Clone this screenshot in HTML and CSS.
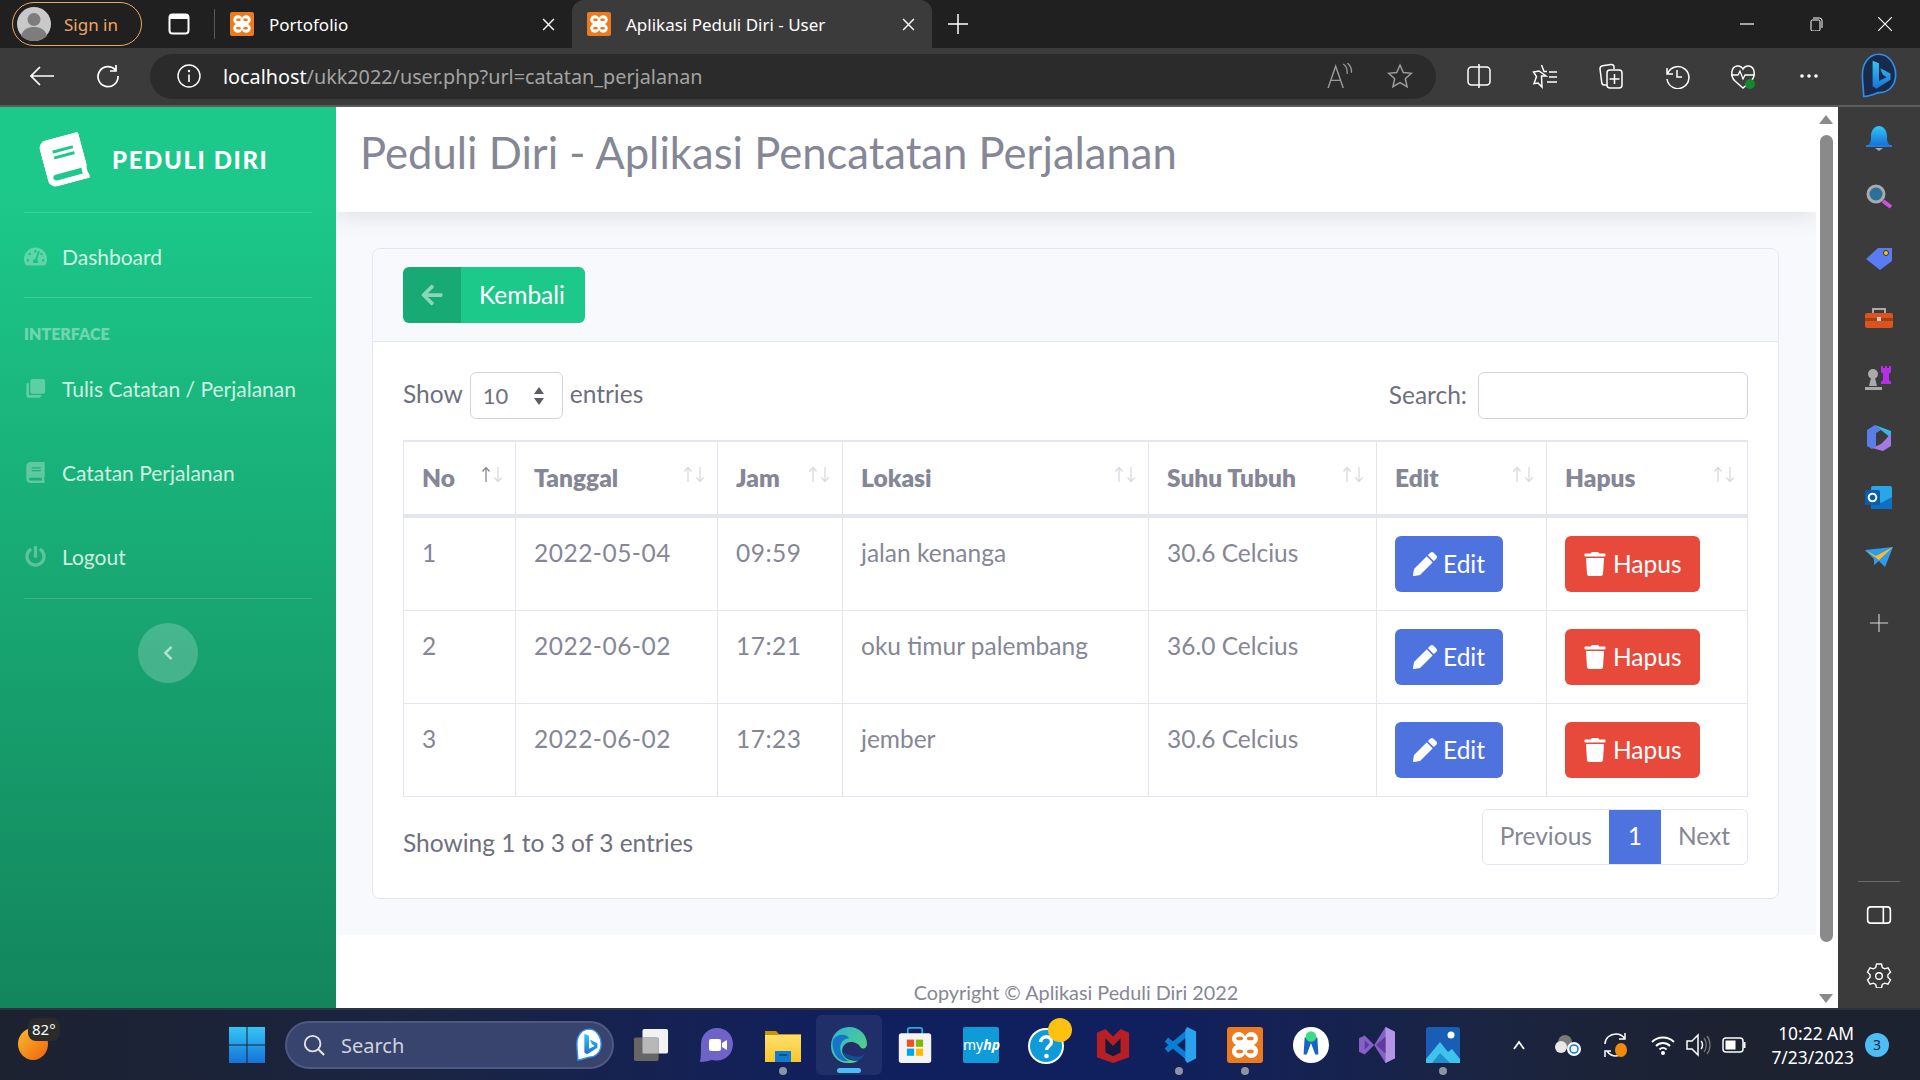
FILE: index.html
```html
<!DOCTYPE html>
<html lang="en">
<head>
	<meta charset="utf-8" />
	<title>Aplikasi Peduli Diri - User</title>
	<link rel="stylesheet" href="styles.css">
</head>
<body>
	<svg class="defs" width="0" height="0">
		<defs>
			<linearGradient id="gBlue" x1="0" y1="0" x2="0" y2="1"><stop offset="0" stop-color="#35c5f5"/><stop offset="1" stop-color="#1573d8"/></linearGradient>
			<linearGradient id="gSun" x1="0" y1="0" x2="1" y2="1"><stop offset="0" stop-color="#fbbb2c"/><stop offset="1" stop-color="#f0620e"/></linearGradient>
			<linearGradient id="gFolder" x1="0" y1="0" x2="0" y2="1"><stop offset="0" stop-color="#ffdf6b"/><stop offset="1" stop-color="#f9c62b"/></linearGradient>
			<linearGradient id="gEdge" x1="0" y1="0" x2="1" y2="1"><stop offset="0" stop-color="#2bb4d9"/><stop offset="1" stop-color="#62d66c"/></linearGradient>
			<symbol id="xampp" viewBox="0 0 24 24">
				<rect x="0" y="0" width="24" height="24" rx="2" fill="#ec7a1f"/>
				<g fill="#fff"><circle cx="7.800" cy="7.800" r="4.500"/><circle cx="16.200" cy="7.800" r="4.500"/><circle cx="7.800" cy="16.200" r="4.500"/><circle cx="16.200" cy="16.200" r="4.500"/><rect x="8" y="8" width="8" height="8"/></g>
				<g fill="#ec7a1f"><rect x="6.200" y="6.500" width="4.500" height="2.400" rx="1.200"/><rect x="13.300" y="6.500" width="4.500" height="2.400" rx="1.200"/><rect x="6.200" y="15.100" width="4.500" height="2.400" rx="1.200"/><rect x="13.300" y="15.100" width="4.500" height="2.400" rx="1.200"/></g>
			</symbol>
			<symbol id="bing" viewBox="0 0 30 36">
				<path d="M15 1C7 1 2 8 2 17c0 6 1 12 1 17 4 0 8-2 12-3 8 0 13-6 13-14S23 1 15 1z" fill="#fff" stroke="#2f8fe8" stroke-width="1.500"/>
				<path d="M10 6l5 2v14l6-3-3-2-2-5 8 4v5l-11 7-3-2z" fill="url(#gBlue)"/>
			</symbol>
			<symbol id="fa-pencil" viewBox="0 0 512 512"><path d="M497.9 142.1l-46.1 46.1c-4.700 4.700-12.300 4.700-17 0l-111-111c-4.700-4.700-4.700-12.300 0-17l46.100-46.100c18.700-18.700 49.100-18.700 67.900 0l60.100 60.100c18.800 18.700 18.800 49.100 0 67.900zM284.200 99.800L21.600 362.400.4 483.900c-2.900 16.400 11.400 30.600 27.800 27.800l121.500-21.300 262.600-262.600c4.700-4.700 4.700-12.300 0-17l-111-111c-4.800-4.700-12.400-4.700-17.100 0z"/></symbol>
			<symbol id="fa-trash" viewBox="0 0 448 512"><path d="M432 32H312l-9.400-18.700A24 24 0 0 0 281.100 0H166.800a23.720 23.720 0 0 0-21.400 13.300L136 32H16A16 16 0 0 0 0 48v32a16 16 0 0 0 16 16h416a16 16 0 0 0 16-16V48a16 16 0 0 0-16-16zM53.200 467a48 48 0 0 0 47.900 45h245.800a48 48 0 0 0 47.900-45L416 128H32z"/></symbol>
			<symbol id="fa-book" viewBox="0 0 448 512"><path d="M448 360V24c0-13.300-10.700-24-24-24H96C43 0 0 43 0 96v320c0 53 43 96 96 96h328c13.300 0 24-10.700 24-24v-16c0-7.500-3.500-14.300-8.900-18.700-4.200-15.400-4.200-59.300 0-74.700 5.400-4.300 8.900-11.100 8.900-18.600zM128 134c0-3.300 2.700-6 6-6h212c3.300 0 6 2.700 6 6v20c0 3.300-2.700 6-6 6H134c-3.300 0-6-2.700-6-6v-20zm0 64c0-3.300 2.700-6 6-6h212c3.300 0 6 2.700 6 6v20c0 3.300-2.700 6-6 6H134c-3.300 0-6-2.700-6-6v-20zm253.400 250H96c-17.700 0-32-14.300-32-32 0-17.600 14.400-32 32-32h285.400c-1.900 17.100-1.900 46.900 0 64z"/></symbol>
			<symbol id="sort" viewBox="0 0 22 17"><path d="M5 16V2M1.500 5.500L5 1.500l3.500 4" fill="none" stroke="currentColor" stroke-width="1.300"/><path d="M17 1v14M13.500 11.500l3.500 4 3.500-4" fill="none" stroke="#d9dae1" stroke-width="1.300"/></symbol>
		</defs>
	</svg>

	<!-- browser tabs -->
	<div class="tabbar">
		<div class="signin">
			<svg class="avatar" viewBox="0 0 34 34"><circle cx="17" cy="17" r="17" fill="#c9c9c9"/><circle cx="17" cy="12.500" r="6.500" fill="#7d7d7d"/><path d="M4 29c2-7 7-9 13-9s11 2 13 9c-3 3-8 5-13 5s-10-2-13-5z" fill="#7d7d7d"/></svg>
			<span>Sign in</span>
		</div>
		<svg class="tabs-icon" viewBox="0 0 22 22"><rect x="1.500" y="1.500" width="19" height="19" rx="3" fill="none" stroke="#fff" stroke-width="2"/><path d="M1.500 4.500a3 3 0 0 1 3-3h13a3 3 0 0 1 3 3V6h-19z" fill="#fff"/></svg>
		<div class="tab-sep"></div>
		<div class="tab">
			<svg class="favicon"><use href="#xampp"/></svg>
			<span class="tab-title">Portofolio</span>
			<svg class="tab-close" viewBox="0 0 12 12"><path d="M1 1l10 10M11 1L1 11" stroke="#fff" stroke-width="1.300"/></svg>
		</div>
		<div class="tab tab-active">
			<svg class="favicon"><use href="#xampp"/></svg>
			<span class="tab-title">Aplikasi Peduli Diri - User</span>
			<svg class="tab-close" viewBox="0 0 12 12"><path d="M1 1l10 10M11 1L1 11" stroke="#fff" stroke-width="1.300"/></svg>
		</div>
		<svg class="tab-new" viewBox="0 0 20 20"><path d="M10 0v20M0 10h20" stroke="#fff" stroke-width="1.500"/></svg>
		<div class="win-ctrl">
			<svg viewBox="0 0 14 14"><path d="M0 7h14" stroke="#fff" stroke-width="1.200"/></svg>
			<svg viewBox="0 0 14 14"><rect x="2" y="3" width="9" height="11" rx="1.500" fill="none" stroke="#fff"/><path d="M4 1h6.500A2.500 2.500 0 0 1 13 3.500V11" fill="none" stroke="#fff"/></svg>
			<svg viewBox="0 0 14 14"><path d="M0 0l14 14M14 0L0 14" stroke="#fff" stroke-width="1.100"/></svg>
		</div>
	</div>

	<!-- address bar -->
	<div class="toolbar">
		<svg class="tool tool-back" viewBox="0 0 24 20"><path d="M24 10H2M10 1l-9 9 9 9" fill="none" stroke="#fff" stroke-width="1.700"/></svg>
		<svg class="tool tool-reload" viewBox="0 0 24 24"><path d="M19.500 6A10 10 0 1 0 22 12M20 1v6h-6" fill="none" stroke="#fff" stroke-width="1.700"/></svg>
		<div class="address">
			<svg class="info" viewBox="0 0 24 24"><circle cx="12" cy="12" r="11" fill="none" stroke="#fff" stroke-width="1.400"/><path d="M12 10.500V18" stroke="#fff" stroke-width="1.600"/><circle cx="12" cy="7" r="1.200" fill="#fff"/></svg>
			<span class="url"><b>localhost</b>/ukk2022/user.php?url=catatan_perjalanan</span>
			<svg class="addr-icon read" viewBox="0 0 24 24"><path d="M1 23L8 3l7 20M4 16h8" fill="none" stroke="#9a9a9a" stroke-width="1.300"/><path d="M15 1c3 2 4 5 3.500 9M19 0c3 3 4 6 3.500 9" fill="none" stroke="#9a9a9a" stroke-width="1.200"/></svg>
			<svg class="addr-icon star" viewBox="0 0 26 26"><path d="M13 2l3.300 7.500 8 .8-6 5.400 1.800 8L13 19.600 5.900 23.700l1.800-8-6-5.400 8-.8z" fill="none" stroke="#9a9a9a" stroke-width="1.500"/></svg>
		</div>
		<div class="tool-group">
			<svg viewBox="0 0 26 26"><rect x="2" y="4" width="22" height="18" rx="3.500" fill="none" stroke="#fff" stroke-width="1.500"/><path d="M13 1v24" stroke="#fff" stroke-width="1.500"/></svg>
			<svg viewBox="0 0 26 26"><path d="M9.500 2l2.500 6.500h3M14 13H9.500l.5 11-4-4-4 .5 2.500-7-3-4.500 5.500-1z" fill="none" stroke="#fff" stroke-width="1.500"/><path d="M17 9h8M17 14h8M15 19h10" stroke="#fff" stroke-width="1.500"/></svg>
			<svg viewBox="0 0 26 26"><path d="M9 22H6c-1 0-2-1-2.200-2L2 6c0-2 1-3 2.500-3.200L13 1.500c2-.2 3 1 3 2.500V6" fill="none" stroke="#fff" stroke-width="1.500"/><rect x="9" y="7" width="15" height="18" rx="3" fill="none" stroke="#fff" stroke-width="1.500"/><path d="M16.500 11v10M11.500 16h10" stroke="#fff" stroke-width="1.500"/></svg>
			<svg viewBox="0 0 26 26"><path d="M3 5v6h6M3.500 11A11 11 0 1 1 3 16" fill="none" stroke="#fff" stroke-width="1.500"/><path d="M13 7v7h5" fill="none" stroke="#fff" stroke-width="1.500"/></svg>
			<svg viewBox="0 0 26 26"><path d="M5 18C0 13 1 4 7 3c3-.5 5 1 6 3 1-2 3-3.500 6-3 6 1 7 10 2 15l-8 7z" fill="none" stroke="#fff" stroke-width="1.500"/><path d="M1 12h7l2-4 3 8 2-4h9" fill="none" stroke="#fff" stroke-width="1.300"/><circle cx="20" cy="21" r="5" fill="#128a2c"/></svg>
			<svg viewBox="0 0 26 26"><circle cx="6" cy="13" r="1.800" fill="#fff"/><circle cx="13" cy="13" r="1.800" fill="#fff"/><circle cx="20" cy="13" r="1.800" fill="#fff"/></svg>
		</div>
		<svg class="tool-bing" viewBox="0 0 30 36"><path d="M15 1C7 1 2 8 2 17c0 6 1 12 1 17 4 0 8-2 12-3 8 0 13-6 13-14S23 1 15 1z" fill="#1a2a4a" stroke="#2f8fe8" stroke-width="1.300"/><path d="M10 6l5 2v14l6-3-3-2-2-5 8 4v5l-11 7-3-2z" fill="url(#gBlue)"/></svg>
	</div>

	<div class="main">
		<!-- sidebar -->
		<aside class="sidebar">
			<div class="brand">
				<svg class="brand-icon"><use href="#fa-book"/></svg>
				<span class="brand-text">PEDULI DIRI</span>
			</div>
			<hr class="side-line">
			<a class="nav-first">
				<svg class="nav-icon" viewBox="0 0 576 512"><path d="M288 32C128.940 32 0 160.940 0 320c0 52.800 14.250 102.260 39.060 144.800 5.610 9.620 16.300 15.200 27.440 15.200h443c11.140 0 21.830-5.580 27.440-15.200C561.750 422.260 576 372.800 576 320c0-159.060-128.940-288-288-288zm0 64c14.710 0 26.580 10.130 30.320 23.650-1.110 2.260-2.640 4.230-3.450 6.670l-9.220 27.670c-5.130 3.490-10.970 6.010-17.640 6.010-17.670 0-32-14.330-32-32S270.330 96 288 96zM96 384c-17.670 0-32-14.330-32-32s14.330-32 32-32 32 14.330 32 32-14.330 32-32 32zm48-160c-17.670 0-32-14.330-32-32s14.330-32 32-32 32 14.330 32 32-14.330 32-32 32zm246.770-72.410l-61.330 184C343.130 347.330 352 364.540 352 384c0 11.720-3.380 22.550-8.880 32H232.880c-5.500-9.450-8.880-20.280-8.880-32 0-33.940 26.500-61.430 59.900-63.590l61.340-184.010c4.170-12.560 17.730-19.450 30.360-15.170 12.570 4.190 19.350 17.790 15.170 30.360zm14.660 57.200l15.520-46.550c3.470-1.290 7.130-2.230 11.050-2.230 17.670 0 32 14.330 32 32s-14.330 32-32 32c-11.380-.010-20.890-6.280-26.570-15.220zM480 384c-17.670 0-32-14.330-32-32s14.330-32 32-32 32 14.330 32 32-14.330 32-32 32z"/></svg>
				<span>Dashboard</span>
			</a>
			<hr class="side-line">
			<div class="side-head">INTERFACE</div>
			<a class="nav-item">
				<svg class="nav-icon" viewBox="0 0 24 24"><rect x="6" y="1" width="17" height="17" rx="2.500"/><path d="M4 5.500h.5V19.500h14v.5c0 1.500-1 2.500-2.500 2.500H4A2.500 2.500 0 0 1 1.500 20V8A2.500 2.500 0 0 1 4 5.500z"/></svg>
				<span>Tulis Catatan / Perjalanan</span>
			</a>
			<a class="nav-item">
				<svg class="nav-icon"><use href="#fa-book"/></svg>
				<span>Catatan Perjalanan</span>
			</a>
			<a class="nav-item">
				<svg class="nav-icon" viewBox="0 0 512 512"><path d="M400 54.100c63 45 104 118.600 104 201.900 0 136.800-110.800 247.700-247.500 248C120 504.300 8.200 393 8 256.400 7.900 173.100 48.900 99.300 111.800 54.200c11.700-8.300 28-4.800 35 7.700L162.600 90c5.900 10.500 3.100 23.800-6.600 31-41.500 30.800-68 79.600-68 134.900-.1 92.300 74.500 168.100 168 168.100 91.600 0 168.600-74.200 168-169.100-.3-51.800-24.700-101.800-68.100-134-9.700-7.200-12.400-20.500-6.500-30.900l15.800-28.100c7-12.400 23.200-16.100 34.800-7.900zM296 264V24c0-13.300-10.700-24-24-24h-32c-13.300 0-24 10.700-24 24v240c0 13.300 10.700 24 24 24h32c13.300 0 24-10.700 24-24z"/></svg>
				<span>Logout</span>
			</a>
			<hr class="side-line side-line-end">
			<div class="side-toggle">
				<svg viewBox="0 0 320 512"><path d="M34.520 239.030L228.870 44.690c9.370-9.370 24.570-9.370 33.940 0l22.670 22.670c9.350 9.350 9.370 24.520.04 33.900L131.490 256l154.020 154.750c9.340 9.380 9.320 24.550-.04 33.900l-22.670 22.670c-9.370 9.370-24.570 9.370-33.940 0L34.520 272.970c-9.370-9.370-9.370-24.570 0-33.940z"/></svg>
			</div>
		</aside>

		<!-- page -->
		<main class="page">
			<header class="topbar">
				<h1>Peduli Diri - Aplikasi Pencatatan Perjalanan</h1>
			</header>
			<section class="content">
				<div class="card">
					<div class="card-head">
						<a class="btn-back">
							<span class="btn-back-icon"><svg viewBox="0 0 448 512"><path d="M257.500 445.100l-22.200 22.200c-9.400 9.400-24.600 9.400-33.900 0L7 273c-9.400-9.400-9.400-24.600 0-33.900L201.400 44.700c9.400-9.400 24.600-9.400 33.900 0l22.200 22.200c9.500 9.500 9.300 25-.4 34.300L136.600 216H424c13.300 0 24 10.700 24 24v32c0 13.300-10.700 24-24 24H136.600l120.500 114.800c9.800 9.300 10 24.800.4 34.300z"/></svg></span>
							<span class="btn-back-text">Kembali</span>
						</a>
					</div>
					<div class="card-body">
						<div class="dt-top">
							<label class="dt-length">Show
								<span class="select-wrap">
									<select><option>10</option></select>
									<svg class="select-caret" viewBox="0 0 12 20"><path d="M6 1l5 7H1zM6 19l-5-7h10z"/></svg>
								</span>
								entries</label>
							<label class="dt-search">Search: <input type="text"></label>
						</div>
						<table class="dt-table">
							<colgroup>
								<col class="c-no"><col class="c-date"><col class="c-time"><col class="c-place"><col class="c-temp"><col class="c-edit"><col class="c-del">
							</colgroup>
							<thead>
								<tr>
									<th>No<svg class="sort sort-on"><use href="#sort"/></svg></th>
									<th>Tanggal<svg class="sort"><use href="#sort"/></svg></th>
									<th>Jam<svg class="sort"><use href="#sort"/></svg></th>
									<th>Lokasi<svg class="sort"><use href="#sort"/></svg></th>
									<th>Suhu Tubuh<svg class="sort"><use href="#sort"/></svg></th>
									<th>Edit<svg class="sort"><use href="#sort"/></svg></th>
									<th>Hapus<svg class="sort"><use href="#sort"/></svg></th>
								</tr>
							</thead>
							<tbody>
								<tr>
									<td>1</td><td class="num">2022-05-04</td><td class="num">09:59</td><td>jalan kenanga</td><td>30.6 Celcius</td>
									<td><a class="btn btn-edit"><svg><use href="#fa-pencil"/></svg>Edit</a></td>
									<td><a class="btn btn-del"><svg><use href="#fa-trash"/></svg>Hapus</a></td>
								</tr>
								<tr>
									<td>2</td><td class="num">2022-06-02</td><td class="num">17:21</td><td>oku timur palembang</td><td>36.0 Celcius</td>
									<td><a class="btn btn-edit"><svg><use href="#fa-pencil"/></svg>Edit</a></td>
									<td><a class="btn btn-del"><svg><use href="#fa-trash"/></svg>Hapus</a></td>
								</tr>
								<tr>
									<td>3</td><td class="num">2022-06-02</td><td class="num">17:23</td><td>jember</td><td>30.6 Celcius</td>
									<td><a class="btn btn-edit"><svg><use href="#fa-pencil"/></svg>Edit</a></td>
									<td><a class="btn btn-del"><svg><use href="#fa-trash"/></svg>Hapus</a></td>
								</tr>
							</tbody>
						</table>
						<div class="dt-bottom">
							<div class="dt-info">Showing 1 to 3 of 3 entries</div>
							<div class="pager">
								<a class="pager-prev">Previous</a>
								<a class="pager-num">1</a>
								<a class="pager-next">Next</a>
							</div>
						</div>
					</div>
				</div>
			</section>
			<footer class="foot">Copyright &copy; Aplikasi Peduli Diri 2022</footer>
		</main>

		<!-- scrollbar -->
		<div class="scrollbar">
			<svg viewBox="0 0 14 9"><path d="M7 0l7 9H0z"/></svg>
			<div class="scroll-thumb"></div>
			<svg viewBox="0 0 14 9"><path d="M7 9L0 0h14z"/></svg>
		</div>

		<!-- edge sidebar -->
		<div class="rail">
			<div class="rail-item"><svg viewBox="0 0 30 30"><path d="M4 22c3-2 3-5 3-9 0-6 4-10 8-10s8 4 8 10c0 4 0 7 3 9z" fill="url(#gBlue)"/><path d="M2 22h26v2H2z" fill="#1f7fe0"/><path d="M11 25h8l-4 3z" fill="#aaa"/></svg></div>
			<div class="rail-item"><svg viewBox="0 0 30 30"><circle cx="12" cy="11" r="8" fill="#2c6f9a" stroke="#aaa" stroke-width="3"/><path d="M19 18l8 6" stroke="#d04ee0" stroke-width="4"/></svg></div>
			<div class="rail-item"><svg viewBox="0 0 30 30"><path d="M2 16L14 5h14v13l-12 9z" fill="#5a7cf2"/><circle cx="22" cy="10" r="2.500" fill="#f2c811" stroke="#333"/></svg></div>
			<div class="rail-item"><svg viewBox="0 0 30 30"><rect x="1" y="10" width="28" height="15" rx="2" fill="#d9541e"/><path d="M1 15h28v3H1z" fill="#a83c12"/><path d="M9 10V6h12v4" fill="none" stroke="#aaa" stroke-width="2"/><rect x="13" y="14" width="4" height="4" fill="#ccc"/></svg></div>
			<div class="rail-item"><svg viewBox="0 0 30 30"><circle cx="9" cy="11" r="5" fill="#aaa"/><path d="M7 15h4l2 8H5zM1 24h17v3H1z" fill="#aaa"/><path d="M17 3h2v2h2V3h2v2h2V3h2v6l-2 2v6l2 2v2H17v-2l2-2v-6l-2-2z" fill="#b52ee8"/></svg></div>
			<div class="rail-item"><svg viewBox="0 0 30 30"><path d="M11 2L3 7v16l5 3 4-3V10l5-3z" fill="#5a7ee8"/><path d="M11 2l16 6v7l-10-8z" fill="#38b6e6"/><path d="M27 10v13l-8 5-11-3 9-4 5-5z" fill="#a37be0"/></svg></div>
			<div class="rail-item"><svg viewBox="0 0 30 30"><rect x="7" y="3" width="21" height="22" rx="2" fill="#2aa6e8"/><path d="M7 14l10 6 11-6v12H7z" fill="#0f6fc5"/><rect x="1" y="7" width="15" height="15" rx="1.500" fill="#0a5dad"/><circle cx="8.500" cy="14.500" r="3.800" fill="none" stroke="#fff" stroke-width="2"/></svg></div>
			<div class="rail-item"><svg viewBox="0 0 30 30"><path d="M1 7l28-3-8 20-6-6-5 4v-6z" fill="#2f9bf0"/><path d="M1 7l14 10 14-13-17 9z" fill="#fbbf24"/></svg></div>
			<div class="rail-item rail-add"><svg viewBox="0 0 22 22"><path d="M11 1v20M1 11h20" stroke="#d8d8d8" stroke-width="1.200"/></svg></div>
			<div class="rail-bottom">
				<hr class="rail-line">
				<div class="rail-item"><svg viewBox="0 0 24 20"><rect x="1.500" y="2.500" width="21" height="15" rx="3" fill="none" stroke="#fff" stroke-width="1.500"/><path d="M16 2.500v15" stroke="#fff" stroke-width="1.500"/></svg></div>
				<div class="rail-item"><svg viewBox="0 0 26 26"><path d="M10.500 2h5l.8 3.500 2.300 1.300 3.400-1 2.500 4.400-2.600 2.500v2.600l2.600 2.500-2.500 4.400-3.400-1-2.300 1.300-.8 3.500h-5l-.8-3.500-2.300-1.300-3.400 1L1.500 17.800l2.600-2.500v-2.600L1.500 10.200 4 5.800l3.400 1 2.300-1.300z" fill="none" stroke="#fff" stroke-width="1.400"/><circle cx="13" cy="14" r="3.300" fill="none" stroke="#fff" stroke-width="1.400"/></svg></div>
			</div>
		</div>
	</div>

	<!-- windows taskbar -->
	<div class="taskbar">
		<div class="weather">
			<svg class="sun" viewBox="0 0 30 32"><ellipse cx="15" cy="16" rx="15" ry="16" fill="url(#gSun)"/></svg>
			<span class="temp">82°</span>
		</div>
		<div class="slot"><svg class="i-win" viewBox="0 0 35 35"><path d="M0 0h17v17H0zM18 0h17v17H18zM0 18h17v17H0zM18 18h17v17H18z" fill="url(#gBlue)"/></svg></div>
		<div class="task-search">
			<svg class="search-glass" viewBox="0 0 24 24"><circle cx="10.500" cy="10.500" r="8.500" fill="none" stroke="#e6e6e6" stroke-width="2"/><path d="M17 17l6 6" stroke="#e6e6e6" stroke-width="2.200"/></svg>
			<span>Search</span>
			<svg class="search-bing"><use href="#bing"/></svg>
		</div>
		<div class="apps">
			<div class="slot"><svg viewBox="0 0 38 36"><rect x="10" y="1" width="27" height="26" rx="2" fill="#f2f2f2"/><rect x="1" y="10" width="26" height="25" rx="2" fill="#666"/><rect x="10" y="10" width="17" height="17" fill="#b8b8b8"/></svg></div>
			<div class="slot"><svg viewBox="0 0 34 36"><path d="M17 1C8 1 1 8 1 17c0 6 0 13-1 18 4 0 8-1 12-2 2 .5 3 .5 5 .5 9 0 16-7 16-16.500S26 1 17 1z" fill="#6e64c8"/><rect x="9" y="12" width="12" height="12" rx="2" fill="#fff"/><path d="M22 16l5-3v10l-5-3z" fill="#fff"/></svg></div>
			<div class="slot slot-dot"><svg viewBox="0 0 36 34"><path d="M0 3h11l3 3h22v28H0z" fill="#c8900c"/><path d="M0 7h36v27H0z" fill="url(#gFolder)"/><path d="M10 23h16v11H10z" fill="#0f7ccf"/><path d="M14 27h8" stroke="#09456f" stroke-width="1.500"/></svg></div>
			<div class="slot slot-active"><svg viewBox="0 0 38 38"><path d="M19 0C8 0 0 9 0 20c0 10 7 18 18 18 5 0 9-1 11-3-7 2-15-1-17-8-1-5 2-10 7-11 6-1 10 2 12 5 2 3 7 2 7-3C38 8 30 0 19 0z" fill="url(#gEdge)"/><path d="M2 14c3-7 15-8 17-2-8 1-10 7-9 13 1 5 5 9 9 11-7 1-12-2-15-8-2-5-3-9-2-14z" fill="#1675c8"/><path d="M12 27c2 6 10 9 17 8 3-1 5-3 6-6-3 2-7 3-11 2-5-1-8-3-12-4z" fill="#124e9a"/></svg></div>
			<div class="slot"><svg viewBox="0 0 36 40"><path d="M10 8V3a2 2 0 0 1 2-2h12a2 2 0 0 1 2 2v5" fill="none" stroke="#29a8e0" stroke-width="2"/><rect x="0" y="7" width="36" height="33" rx="3" fill="#f4f4f4"/><path d="M9 14h8v8H9z" fill="#f25022"/><path d="M19 14h8v8h-8z" fill="#7fba00"/><path d="M9 24h8v8H9z" fill="#00a4ef"/><path d="M19 24h8v8h-8z" fill="#ffb900"/></svg></div>
			<div class="slot"><span class="myhp">my<i>hp</i></span></div>
			<div class="slot"><svg class="i-help" viewBox="0 0 44 46"><circle cx="18" cy="28" r="18" fill="#fff"/><circle cx="18" cy="28" r="16" fill="#0f9bd7"/><path d="M12.500 24c1-7 11-7 11 0 0 4-5 4-5 8" fill="none" stroke="#fff" stroke-width="3.400"/><circle cx="18.500" cy="38" r="2.300" fill="#fff"/><circle cx="32" cy="12" r="12" fill="#fdc111"/></svg></div>
			<div class="slot"><svg viewBox="0 0 34 38"><path d="M0 6l9-4 8 8 8-8 9 4v26l-17 6-17-6z" fill="#b81f24"/><path d="M9 12l8 8 8-8v15l-8 4-8-4z" fill="#16193f"/></svg></div>
			<div class="slot slot-dot"><svg viewBox="0 0 38 40"><path d="M29 6L5 26M5 14l24 20" stroke="#0a7ed4" stroke-width="6"/><path d="M26 3l2-3 10 5v30l-10 5-2-3z" fill="#2aa3ee"/></svg></div>
			<div class="slot slot-dot"><svg><use href="#xampp"/></svg></div>
			<div class="slot"><svg viewBox="0 0 34 34"><circle cx="17" cy="17" r="17" fill="#fff"/><path d="M11 10h12l1 16h-3l-4-11-4 11h-3z" fill="#1666c0"/><circle cx="17" cy="9" r="5" fill="#3ddc84"/></svg></div>
			<div class="slot"><svg viewBox="0 0 38 38"><path d="M0 12l6-3 10 10L28 0l10 5v28l-10 5-12-19L6 29l-6-3z" fill="#8661c5"/><path d="M28 0l10 5v28l-10 5z" fill="#b394e5"/><path d="M6 14v10l5-5z" fill="#5d3c9e"/><path d="M28 10L18 19l10 9z" fill="#5d3c9e"/></svg></div>
			<div class="slot slot-dot"><svg viewBox="0 0 34 36"><rect x="0" y="0" width="34" height="36" rx="3" fill="#1a5db5"/><circle cx="25" cy="8" r="3.500" fill="#fff"/><path d="M0 32l14-17 8 10 4-3 8 10v4H0z" fill="#3ec3ec"/><path d="M6 36l8-10 10 10z" fill="#1f8fcc"/></svg></div>
		</div>
		<div class="tray">
			<svg class="t-chev" viewBox="0 0 12 10"><path d="M1 9l5-7 5 7" fill="none" stroke="#fff" stroke-width="1.800"/></svg>
			<svg class="t-cloud" viewBox="0 0 26 24"><circle cx="10" cy="9" r="7" fill="#7a7a7a"/><circle cx="6" cy="14" r="6" fill="#e8e8e8"/><circle cx="19" cy="16" r="7" fill="#fff"/><circle cx="19" cy="16" r="4" fill="none" stroke="#1a78d0" stroke-width="1.600"/></svg>
			<svg class="t-sync" viewBox="0 0 26 26"><path d="M3 12C3 6 8 2 14 2c4 0 7 2 9 5M23 1v6h-6M23 15c0 6-5 9-9 9-4 0-7-2-9-5M3 25v-6h6" fill="none" stroke="#fff" stroke-width="1.500"/><ellipse cx="19" cy="18" rx="6" ry="7" fill="#f48a0c"/></svg>
			<svg class="t-wifi" viewBox="0 0 26 22"><path d="M2 8c6-6 16-6 22 0M6 12c4-4 10-4 14 0M9.500 15.500c2-2 5-2 7 0" fill="none" stroke="#fff" stroke-width="2"/><circle cx="13" cy="19" r="2" fill="#fff"/></svg>
			<svg class="t-vol" viewBox="0 0 26 24"><path d="M1 8h5l6-6v20l-6-6H1z" fill="none" stroke="#fff" stroke-width="1.500"/><path d="M15 8c2 2 2 6 0 8" fill="none" stroke="#fff" stroke-width="1.500"/><path d="M18 5c3 4 3 10 0 14M21 3c4 5 4 13 0 18" fill="none" stroke="#777" stroke-width="1.300"/></svg>
			<svg class="t-batt" viewBox="0 0 25 16"><rect x="1" y="1" width="20" height="14" rx="3" fill="none" stroke="#fff" stroke-width="1.500"/><rect x="3.500" y="3.500" width="10" height="9" fill="#fff"/><path d="M22.500 5v6" stroke="#fff" stroke-width="2"/></svg>
			<div class="clock"><div>10:22 AM</div><div>7/23/2023</div></div>
			<div class="notif">3</div>
		</div>
	</div>
</body>
</html>
```

FILE: styles.css
```css
*
{
	box-sizing: border-box;
}

html, body
{
	margin: 0;
	height: 100%;
	overflow: hidden;
}

body
{
	display: flex;
	flex-direction: column;
	font-family: Lato, "Noto Sans", sans-serif;
	font-size: 24.500px;
	color: #858796;
	background-color: #fff;
}

.defs
{
	position: absolute;
}

svg
{
	display: block;
	flex: none;
}

/* browser tabs */

.tabbar
{
	display: flex;
	align-items: center;
	height: 48px;
	flex: none;
	padding-left: 12px;
	background-color: #202020;
	font-family: "Noto Sans", sans-serif;
	font-size: 17px;
	color: #fff;
}

.signin
{
	display: flex;
	align-items: center;
	gap: 13px;
	width: 130px;
	height: 44px;
	padding-left: 4px;
	border: 1.500px solid #eda766;
	border-radius: 22px;
	color: #eda766;
}

.avatar
{
	width: 34px;
	height: 34px;
}

.tabs-icon
{
	width: 22px;
	height: 22px;
	margin-left: 26px;
}

.tab-sep
{
	width: 1px;
	height: 30px;
	margin-left: 24px;
	background-color: #5a5a5a;
}

.tab
{
	display: flex;
	align-items: center;
	width: 357px;
	height: 48px;
	padding: 0 17px 0 15px;
}

.tab-active
{
	width: 360px;
	background-color: #3b3b3b;
	border-radius: 12px 12px 0 0;
}

.favicon
{
	width: 24px;
	height: 24px;
}

.tab-title
{
	flex: 1;
	margin-left: 15px;
}

.tab-close
{
	width: 13px;
	height: 13px;
}

.tab-new
{
	width: 20px;
	height: 20px;
	margin-left: 16px;
}

.win-ctrl
{
	display: flex;
	gap: 55px;
	margin-left: auto;
	margin-right: 28px;
}

.win-ctrl svg
{
	width: 14px;
	height: 14px;
}

/* address bar */

.toolbar
{
	display: flex;
	align-items: center;
	height: 59px;
	flex: none;
	padding: 0 20px 1px 30px;
	background-color: #3b3b3b;
	border-bottom: 2px solid #5c5c5c;
}

.tool-back
{
	width: 24px;
	height: 20px;
}

.tool-reload
{
	width: 24px;
	height: 24px;
	margin-left: 42px;
}

.address
{
	display: flex;
	align-items: center;
	width: 1286px;
	height: 45px;
	margin-left: 30px;
	padding: 0 23px 0 27px;
	background-color: #2b2b2b;
	border-radius: 23px;
}

.info
{
	width: 24px;
	height: 24px;
}

.url
{
	flex: 1;
	margin-left: 22px;
	font-family: "Noto Sans", sans-serif;
	font-size: 19.800px;
	color: #a3a3a3;
}

.url b
{
	font-weight: 400;
	color: #fff;
}

.addr-icon
{
	width: 26px;
	height: 26px;
}

.read
{
	margin-right: 34px;
}

.tool-group
{
	display: flex;
	gap: 40px;
	margin-left: 30px;
}

.tool-group svg
{
	width: 26px;
	height: 26px;
}

.tool-bing
{
	width: 42px;
	height: 46px;
	margin-left: 36px;
}

/* main row */

.main
{
	display: flex;
	flex: 1;
	min-height: 0;
}

.sidebar
{
	display: flex;
	flex-direction: column;
	width: 336px;
	flex: none;
	padding: 0 24px;
	background-image: linear-gradient(180deg, #1cc88a 10%, #13855c 100%);
	color: rgba(255,255,255,.8);
	font-size: 21px;
}

.brand
{
	display: flex;
	align-items: center;
	height: 105px;
	padding-left: 19px;
	color: #fff;
}

.brand-icon
{
	width: 42px;
	height: 48px;
	fill: #fff;
	transform: rotate(-15deg);
}

.brand-text
{
	margin-left: 27px;
	font-size: 24px;
	font-weight: 900;
	letter-spacing: 1.600px;
}

.side-line
{
	width: 100%;
	height: 1px;
	margin: 0;
	border: 0;
	background-color: rgba(255,255,255,.16);
}

.nav-first, .nav-item
{
	display: flex;
	align-items: center;
	gap: 15px;
}

.nav-first
{
	height: 84px;
	padding-top: 2px;
}

.nav-item
{
	height: 84px;
}

.nav-icon
{
	width: 23px;
	height: 21px;
	fill: rgba(255,255,255,.3);
}

.side-head
{
	height: 48px;
	padding-top: 26px;
	font-size: 16px;
	font-weight: 800;
	line-height: 19px;
	color: rgba(255,255,255,.4);
}

.side-toggle
{
	display: flex;
	align-items: center;
	justify-content: center;
	align-self: center;
	width: 60px;
	height: 60px;
	margin-top: 24px;
	border-radius: 50%;
	background-color: rgba(255,255,255,.2);
}

.side-toggle svg
{
	width: 12px;
	height: 16px;
	fill: rgba(255,255,255,.6);
}

/* page */

.page
{
	display: flex;
	flex-direction: column;
	flex: 1;
	min-width: 0;
	overflow: hidden;
}

.topbar
{
	position: relative;
	display: flex;
	align-items: center;
	height: 105px;
	flex: none;
	padding: 0 24px;
	background-color: #fff;
	box-shadow: 0 3px 24px rgba(58,59,69,.14);
}

h1
{
	margin: 0 0 14px;
	font-size: 43.600px;
	font-weight: 400;
	line-height: 1.2;
	color: #858796;
}

.content
{
	height: 723px;
	flex: none;
	padding: 36px 37px 0 36px;
	background-color: #f8f9fc;
}

.card
{
	height: 651px;
	background-color: #fff;
	border: 1px solid #e3e6f0;
	border-radius: 8px;
}

.card-head
{
	display: flex;
	align-items: center;
	height: 93px;
	padding: 0 30px;
	background-color: #f8f9fc;
	border-bottom: 1px solid #e3e6f0;
	border-radius: 8px 8px 0 0;
}

.btn-back
{
	display: flex;
	height: 56px;
	width: 182px;
	color: #fff;
	background-color: #1cc88a;
	border-radius: 6px;
	overflow: hidden;
}

.btn-back-icon
{
	display: flex;
	align-items: center;
	justify-content: center;
	width: 58px;
	background-color: rgba(0,0,0,.15);
}

.btn-back-icon svg
{
	width: 22px;
	height: 24px;
	fill: rgba(255,255,255,.5);
}

.btn-back-text
{
	padding-left: 18px;
	line-height: 56px;
}

.card-body
{
	padding: 30px;
}

.dt-top
{
	display: flex;
	justify-content: space-between;
	height: 47px;
	margin-bottom: 21px;
	color: #6e707e;
}

.dt-length, .dt-search
{
	display: flex;
	align-items: center;
	gap: 7px;
}

.dt-length
{
	padding-bottom: 4px;
}

.dt-search
{
	padding-bottom: 2px;
}

.select-wrap
{
	position: relative;
	display: block;
	margin-bottom: -4px;
}

select
{
	display: block;
	width: 93px;
	height: 47px;
	padding: 0 12px;
	font-family: inherit;
	font-size: 22px;
	color: #6e707e;
	background-color: #fff;
	border: 1.500px solid #d1d3e2;
	border-radius: 6px;
	appearance: none;
}

.select-caret
{
	position: absolute;
	right: 18px;
	top: 14px;
	width: 12px;
	height: 20px;
	fill: #5a5c69;
}

.dt-search input
{
	width: 270px;
	height: 47px;
	margin-bottom: -2px;
	margin-left: 4px;
	background-color: #fff;
	border: 1.500px solid #d1d3e2;
	border-radius: 6px;
}

.dt-table
{
	width: 1344px;
	table-layout: fixed;
	border-collapse: collapse;
	border: 1px solid #e3e6f0;
	border-top: 2px solid #e3e6f0;
}

.c-no { width: 112px; }
.c-date { width: 202px; }
.c-time { width: 125px; }
.c-place { width: 306px; }
.c-temp { width: 228px; }
.c-edit { width: 170px; }
.c-del { width: 201px; }

.dt-table th, .dt-table td
{
	padding: 18px;
	border: 1px solid #e3e6f0;
	text-align: left;
	vertical-align: top;
	line-height: 34px;
	font-weight: 400;
}

.dt-table th
{
	position: relative;
	height: 75px;
	padding-top: 19px;
	padding-bottom: 17px;
	font-weight: 800;
	border-bottom: 4px solid #e3e6f0;
}

.dt-table td
{
	height: 93px;
}

.dt-table .num
{
	letter-spacing: .5px;
}

.sort
{
	position: absolute;
	top: 24px;
	right: 12px;
	width: 22px;
	height: 17px;
	color: #d9dae1;
}

.sort-on
{
	color: #858796;
}

.btn
{
	display: inline-flex;
	align-items: center;
	height: 56px;
	padding: 0 18px;
	color: #fff;
	border-radius: 6px;
}

.btn svg
{
	width: 24px;
	height: 24px;
	margin-right: 6px;
	fill: #fff;
}

.btn-edit
{
	background-color: #4e73df;
}

.btn-del
{
	background-color: #e74a3b;
}

.dt-bottom
{
	display: flex;
	justify-content: space-between;
	margin-top: 12px;
}

.dt-info
{
	padding-top: 19px;
	color: #6e707e;
}

.pager
{
	display: flex;
	height: 56px;
	line-height: 52px;
	border: 1px solid #e3e6f0;
	border-radius: 6px;
	overflow: hidden;
}

.pager-prev, .pager-next
{
	padding: 0 17px;
}

.pager-num
{
	width: 52px;
	text-align: center;
	color: #fff;
	background-color: #4e73df;
}

.foot
{
	flex: 1;
	padding-top: 45px;
	font-size: 19.800px;
	text-align: center;
	background-color: #fff;
}

/* scrollbar */

.scrollbar
{
	display: flex;
	flex-direction: column;
	align-items: center;
	width: 22px;
	flex: none;
	padding: 8px 2px 5px 0;
	background-color: #fff;
}

.scrollbar svg
{
	width: 14px;
	height: 9px;
	fill: #8a8a8a;
}

.scroll-thumb
{
	flex: 1;
	width: 13px;
	margin: 11px 0 52px;
	background-color: #8a8a8a;
	border-radius: 7px;
}

/* edge sidebar */

.rail
{
	display: flex;
	flex-direction: column;
	align-items: center;
	width: 82px;
	flex: none;
	padding: 1px 0 3px;
	background-color: #3b3b3b;
}

.rail-item
{
	display: flex;
	align-items: center;
	justify-content: center;
	width: 100%;
	height: 60px;
	flex: none;
}

.rail-item svg
{
	width: 30px;
	height: 30px;
}

.rail-add
{
	margin-top: 5px;
}

.rail-add svg
{
	width: 20px;
	height: 20px;
}

.rail-bottom
{
	width: 100%;
	margin-top: auto;
}

.rail-bottom .rail-item svg
{
	width: 26px;
	height: 26px;
}

.rail-line
{
	width: 42px;
	height: 1px;
	margin: 0 auto 3px;
	border: 0;
	background-color: #6a6a6a;
}

/* windows taskbar */

.taskbar
{
	display: flex;
	align-items: center;
	height: 72px;
	flex: none;
	color: #fff;
	font-family: "Noto Sans", sans-serif;
	background-image: linear-gradient(90deg, #1c2230 0%, #1b2440 20%, #10205f 45%, #10205f 60%, #1b2440 78%, #1c2230 90%);
	border-top: 2px solid #2e3342;
}

.weather
{
	position: relative;
	width: 214px;
	height: 70px;
	flex: none;
}

.sun
{
	position: absolute;
	left: 18px;
	top: 18px;
	width: 30px;
	height: 32px;
}

.temp
{
	position: absolute;
	left: 28px;
	top: 8px;
	padding: 1px 4px;
	font-size: 15px;
	line-height: 21px;
	background-color: #2b2b2b;
	border-radius: 8px;
}

.slot
{
	position: relative;
	display: flex;
	align-items: center;
	justify-content: center;
	width: 66px;
	height: 60px;
	flex: none;
}

.slot svg
{
	width: 36px;
	height: 36px;
}

.slot .i-help
{
	width: 44px;
	height: 46px;
	margin-left: 5px;
	margin-bottom: 8px;
}

.slot-dot::after
{
	content: "";
	position: absolute;
	left: 29px;
	bottom: 0;
	width: 8px;
	height: 8px;
	border-radius: 50%;
	background-color: #8d93a3;
}

.slot-active
{
	background-color: rgba(255,255,255,.07);
	border-radius: 6px;
}

.slot-active::after
{
	content: "";
	position: absolute;
	left: 21px;
	bottom: 2px;
	width: 24px;
	height: 5px;
	border-radius: 3px;
	background-color: #4dbdf5;
}

.i-win
{
	width: 35px;
	height: 35px;
}

.task-search
{
	display: flex;
	align-items: center;
	width: 329px;
	height: 48px;
	margin-left: 5px;
	margin-right: 4px;
	padding: 0 9px 0 16px;
	font-size: 20px;
	color: #cfd3dc;
	background-color: #39446e;
	border: 2px solid #4e5880;
	border-radius: 24px;
}

.search-glass
{
	width: 22px;
	height: 22px;
}

.task-search span
{
	flex: 1;
	margin-left: 16px;
}

.search-bing
{
	width: 28px;
	height: 34px;
}

.apps
{
	display: flex;
}

.myhp
{
	display: block;
	width: 36px;
	height: 36px;
	font-size: 14px;
	line-height: 36px;
	text-align: center;
	background-color: #0f9bd7;
	border-radius: 2px;
}

.myhp i
{
	font-weight: 700;
}

.tray
{
	display: flex;
	align-items: center;
	margin-left: 37px;
}

.t-chev
{
	width: 12px;
	height: 10px;
}

.t-cloud
{
	width: 26px;
	height: 24px;
	margin-left: 30px;
}

.t-sync
{
	width: 26px;
	height: 26px;
	margin-left: 21px;
}

.t-wifi
{
	width: 26px;
	height: 22px;
	margin-left: 22px;
}

.t-vol
{
	width: 26px;
	height: 24px;
	margin-left: 10px;
}

.t-batt
{
	width: 25px;
	height: 16px;
	margin-left: 10px;
}

.clock
{
	width: 85px;
	margin-left: 22px;
	font-size: 17.400px;
	line-height: 24px;
	text-align: right;
	white-space: nowrap;
}

.notif
{
	width: 24px;
	height: 24px;
	margin-left: 11px;
	font-size: 14px;
	line-height: 24px;
	text-align: center;
	color: #10233f;
	background-color: #4dbdf5;
	border-radius: 50%;
}
```
